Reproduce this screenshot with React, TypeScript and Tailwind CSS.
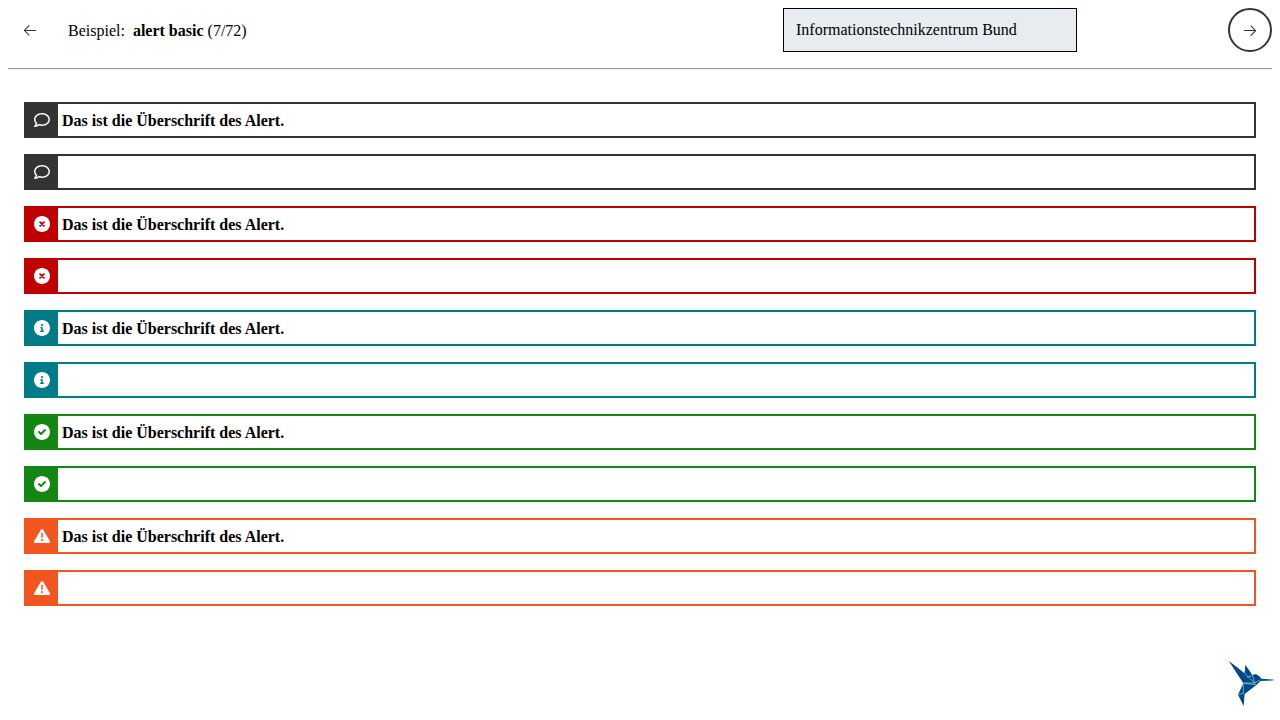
import type { ReactNode } from "react";
import { VscArrowLeft, VscArrowRight } from "react-icons/vsc";

type AlertType = {
  id: string;
  border: string;
  fill: string;
  icon: ReactNode;
};

function Glyph({ d, children }: { d: string; children?: ReactNode }) {
  return (
    <svg viewBox="0 0 512 512" className="size-4" fill="currentColor">
      <path d={d} />
      {children}
    </svg>
  );
}

const DISC = "M256 0C114.6 0 0 114.6 0 256s114.6 256 256 256s256-114.6 256-256S397.4 0 256 0z";

const TYPES: AlertType[] = [
  {
    id: "default",
    border: "border-[#333333]",
    fill: "bg-[#333333]",
    icon: (
      <Glyph d="M256 32C114.6 32 .0272 125.1 .0272 240c0 47.63 19.91 91.25 52.91 126.2c-14.88 39.5-45.87 72.88-46.37 73.25c-6.625 7-8.375 17.25-4.625 26C5.818 474.2 14.38 480 24 480c61.5 0 109.1-25.75 139.1-46.25C191.1 442.8 223.3 448 256 448c141.4 0 255.1-93.13 255.1-208S397.4 32 256 32zM256.1 400c-26.75 0-53.12-4.125-78.38-12.12l-22.75-7.125l-19.5 13.75c-14.25 10.12-33.88 21.38-57.5 29c7.375-12.12 14.37-25.75 19.88-40.25l10.62-28l-20.62-21.87C69.82 314.1 48.07 282.2 48.07 240c0-88.25 93.25-160 208-160s208 71.75 208 160S370.8 400 256.1 400z" />
    ),
  },
  {
    id: "error",
    border: "border-[#c00000]",
    fill: "bg-[#c00000]",
    icon: (
      <Glyph d={DISC}>
        <path d="M196 196l120 120M316 196l-120 120" className="stroke-[#c00000]" strokeWidth="60" strokeLinecap="round" />
      </Glyph>
    ),
  },
  {
    id: "info",
    border: "border-[#007b87]",
    fill: "bg-[#007b87]",
    icon: (
      <Glyph d="M256 0C114.6 0 0 114.6 0 256s114.6 256 256 256s256-114.6 256-256S397.4 0 256 0zM256 128c17.67 0 32 14.33 32 32c0 17.67-14.33 32-32 32S224 177.7 224 160C224 142.3 238.3 128 256 128zM296 384h-80C202.8 384 192 373.3 192 360s10.75-24 24-24h16v-64H224c-13.25 0-24-10.75-24-24S210.8 224 224 224h32c13.25 0 24 10.75 24 24v88h16c13.25 0 24 10.75 24 24S309.3 384 296 384z" />
    ),
  },
  {
    id: "success",
    border: "border-[#148614]",
    fill: "bg-[#148614]",
    icon: (
      <Glyph d={DISC}>
        <path
          d="M160 256l64 64l128-128"
          className="fill-none stroke-[#148614]"
          strokeWidth="60"
          strokeLinecap="round"
          strokeLinejoin="round"
        />
      </Glyph>
    ),
  },
  {
    id: "warning",
    border: "border-[#f35520]",
    fill: "bg-[#f35520]",
    icon: (
      <Glyph d="M506.3 417l-213.3-364c-16.33-28-57.54-28-73.98 0l-213.2 364C-10.59 444.9 9.849 480 42.74 480h426.6C502.1 480 522.6 445 506.3 417zM232 168c0-13.25 10.75-24 24-24S280 154.8 280 168v128c0 13.25-10.75 24-23.1 24S232 309.3 232 296V168zM256 416c-17.36 0-31.44-14.08-31.44-31.44c0-17.36 14.07-31.44 31.44-31.44s31.44 14.08 31.44 31.44C287.4 401.9 273.4 416 256 416z" />
    ),
  },
];

function Alert({ type, label }: { type: AlertType; label?: string }) {
  return (
    <div role="alert" className={`flex h-9 border-2 ${type.border}`}>
      <div className={`flex w-8 items-center justify-end pr-2 text-white ${type.fill}`} aria-hidden="true">
        {type.icon}
      </div>
      {label && <h2 className="flex items-center px-1 pt-0.5 text-base font-bold">{label}</h2>}
    </div>
  );
}

function Logo() {
  return (
    <svg viewBox="24 30 138 138" className="size-[46px] overflow-visible" role="img" aria-label="KoliBri">
      <path
        d="M26 32L74 70L76 44L97 75L108 72L120 80L124 86L162 89V91L122 93L110 104L74 132L71 168L54 134L70 100Z"
        fill="#004b85"
      />
      <path
        d="M74 70L104 99M71 99L104 99L121 90M80 81L98 77L104 99M71 100L108 104M70 101V130L56 134"
        fill="none"
        stroke="#ffffff"
        strokeWidth="1.4"
      />
    </svg>
  );
}

export default function App() {
  return (
    <div className="flex min-h-screen flex-col bg-white p-2 font-['Liberation_Serif',serif] text-base text-black">
      <header className="flex h-11 items-center gap-4">
        <button type="button" aria-label="Vorheriges Beispiel" className="flex size-11 items-center justify-center text-[#333333]">
          <VscArrowLeft className="size-4" />
        </button>
        <p className="flex-1 pt-0.5">
          Beispiel:&nbsp; <strong>alert basic</strong> (7/72)
        </p>
        <select
          aria-label="Theme"
          className="mr-[135px] h-11 w-[294px] appearance-none rounded-none border border-black bg-[#e7ecf0] px-3"
        >
          <option>Informationstechnikzentrum Bund</option>
        </select>
        <button
          type="button"
          aria-label="Nächstes Beispiel"
          className="flex size-11 items-center justify-center rounded-full border-2 border-[#333333] text-[#333333]"
        >
          <VscArrowRight className="size-4" />
        </button>
      </header>
      <hr className="mt-4 h-[2px] border-t border-b border-t-[#9a9a9a] border-b-[#eeeeee]" />
      <main className="grid gap-4 px-4 pt-8">
        {TYPES.flatMap((type) => [
          <Alert key={`${type.id}-label`} type={type} label="Das ist die Überschrift des Alert." />,
          <Alert key={type.id} type={type} />,
        ])}
      </main>
      <footer className="mt-auto flex justify-end pb-1.5">
        <div className="-mr-0.5">
          <Logo />
        </div>
      </footer>
    </div>
  );
}
